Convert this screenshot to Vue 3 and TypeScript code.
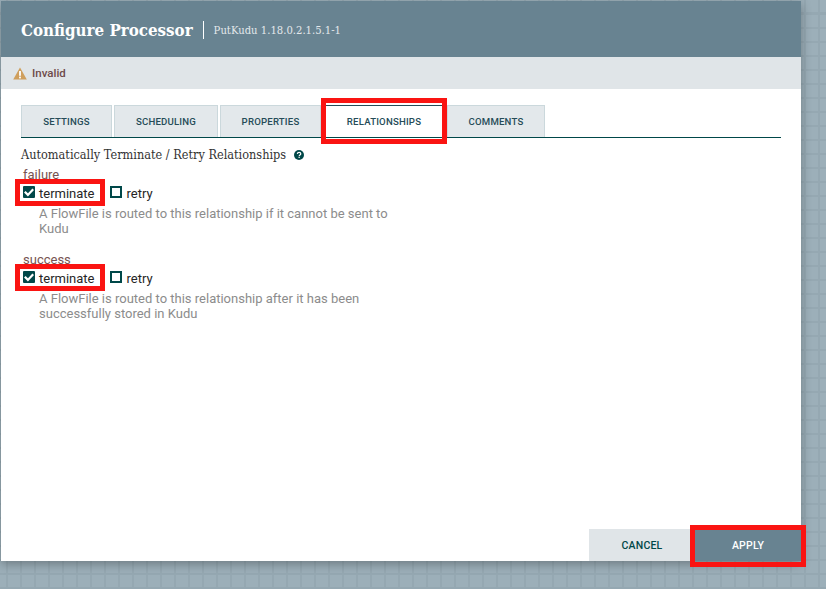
<script setup lang="ts">
interface Relationship {
  name: string
  description: string[]
}

const tabs = ['SETTINGS', 'SCHEDULING', 'PROPERTIES', 'RELATIONSHIPS', 'COMMENTS']
const activeTab = 'RELATIONSHIPS'

const relationships: Relationship[] = [
  {
    name: 'failure',
    description: ['A FlowFile is routed to this relationship if it cannot be sent to', 'Kudu'],
  },
  {
    name: 'success',
    description: ['A FlowFile is routed to this relationship after it has been', 'successfully stored in Kudu'],
  },
]

// red boxes somebody drew on top of the screenshot
const marks = [
  { left: 321, top: 98, width: 126, height: 46 },
  { left: 15, top: 179, width: 90, height: 27 },
  { left: 15, top: 264, width: 90, height: 27 },
  { left: 690, top: 525, width: 116, height: 42 },
]
</script>

<template>
  <div class="page">
    <div class="dialog">
      <header class="dialog-header">
        <span class="title">Configure Processor</span>
        <span class="subtitle">PutKudu 1.18.0.2.1.5.1-1</span>
      </header>

      <div class="status">
        <svg class="warn" width="14" height="13" viewBox="0 0 14 13">
          <path d="M7 0.5 L13.8 12.6 H0.2 Z" fill="#cf9f5d" />
          <rect x="6.1" y="4" width="1.8" height="4.8" fill="#fff" />
          <rect x="6.1" y="9.6" width="1.8" height="1.8" fill="#fff" />
        </svg>
        <span>Invalid</span>
      </div>

      <div class="dialog-body">
        <div class="tabs">
          <div v-for="tab in tabs" :key="tab" class="tab" :class="{ active: tab === activeTab }">{{ tab }}</div>
        </div>

        <div class="setting-name">
          <span>Automatically Terminate / Retry Relationships</span>
          <svg class="help" width="10" height="10" viewBox="0 0 10 10">
            <circle cx="5" cy="5" r="5" fill="#004849" />
            <path d="M3.3 3.9 C3.4 2.8 4.1 2.3 5.1 2.3 C6.1 2.3 6.8 2.9 6.8 3.7 C6.8 4.9 5.2 4.9 5.2 6" fill="none" stroke="#fff" stroke-width="1.2" />
            <rect x="4.5" y="6.7" width="1.3" height="1.2" fill="#fff" />
          </svg>
        </div>

        <div v-for="rel in relationships" :key="rel.name" class="relationship">
          <div class="rel-name">{{ rel.name }}</div>
          <div class="options">
            <span class="option">
              <span class="box checked">
                <svg width="12" height="12" viewBox="0 0 12 12">
                  <path d="M1.8 5.8 L4.9 8.9 L10.2 3.3" fill="none" stroke="#fff" stroke-width="2.2" />
                </svg>
              </span>
              terminate
            </span>
            <span class="option">
              <span class="box"></span>
              retry
            </span>
          </div>
          <div class="rel-desc">
            <div v-for="line in rel.description" :key="line">{{ line }}</div>
          </div>
        </div>
      </div>

      <footer class="dialog-footer">
        <div class="btn cancel">CANCEL</div>
        <div class="btn apply">APPLY</div>
      </footer>
    </div>

    <div
      v-for="(m, i) in marks"
      :key="i"
      class="mark"
      :style="{ left: m.left + 'px', top: m.top + 'px', width: m.width + 'px', height: m.height + 'px' }"
    ></div>
  </div>
</template>

<style>
html,
body {
  margin: 0;
  overflow: hidden;
}
</style>

<style scoped>
.page {
  position: relative;
  width: 826px;
  height: 589px;
  overflow: hidden;
  padding: 1px 0 0 1px;
  box-sizing: border-box;
  background-color: #9cafb9;
  background-image:
    repeating-linear-gradient(to right, #96a9b3 0, #94a7b1 1px, #96a9b3 2px, transparent 2px, transparent 14px),
    repeating-linear-gradient(to bottom, #96a9b3 0, #94a7b1 1px, #96a9b3 2px, transparent 2px, transparent 14px);
  background-position: 6px 13px;
  font-family: Roboto, sans-serif;
}

.dialog {
  width: 800px;
  height: 560px;
  display: flex;
  flex-direction: column;
  background: #fff;
  box-shadow: 0 3px 10px rgba(0, 0, 0, 0.3);
}

.dialog-header {
  height: 56px;
  flex: none;
  display: flex;
  align-items: center;
  padding: 0 20px;
  background: #688391;
  color: #fff;
}

.title {
  font-family: "DejaVu Serif Condensed", "DejaVu Serif", serif;
  font-stretch: condensed;
  font-size: 16.8px;
  font-weight: 700;
  padding-right: 10px;
  border-right: 1px solid #fff;
  line-height: 18px;
  position: relative;
  top: 1px;
}

.subtitle {
  font-family: "DejaVu Serif Condensed", "DejaVu Serif", serif;
  font-stretch: condensed;
  font-size: 11.2px;
  margin-left: 10px;
  position: relative;
  top: 1px;
  color: #e3e8eb;
}

.status {
  height: 32px;
  flex: none;
  display: flex;
  align-items: center;
  gap: 5px;
  padding: 0 13px 0 12px;
  background: #e0e5e8;
  color: #6e4a4a;
  font-size: 11.5px;
  font-weight: 500;
}

.dialog-body {
  flex: 1;
  padding: 16px 20px 0;
}

.tabs {
  display: flex;
  gap: 2px;
  border-bottom: 1px solid #004849;
  height: 32px;
  width: 760px;
}

.tab {
  width: 91px;
  box-sizing: border-box;
  display: flex;
  align-items: center;
  justify-content: center;
  background: #e3e8eb;
  border: 1px solid #cbd8dc;
  border-bottom: none;
  color: #264c58;
  font-size: 9.6px;
  font-weight: 500;
  letter-spacing: 0.2px;
}

.tab:nth-child(2) {
  width: 104px;
}

.tab:nth-child(3) {
  width: 101px;
}

.tab:nth-child(4) {
  width: 126px;
  margin: 0 -2px;
}

.tab:nth-child(5) {
  width: 98px;
}

.tab.active {
  background: #fff;
  border: none;
  border-top: 1px solid #264c58;
}

.setting-name {
  margin-top: 9px;
  height: 16px;
  line-height: 16px;
  font-family: "DejaVu Serif Condensed", "DejaVu Serif", serif;
  font-stretch: condensed;
  font-size: 12.6px;
  color: #333;
  display: flex;
  align-items: center;
  gap: 8px;
}

.relationship {
  margin-left: 2px;
  height: 85px;
}

.rel-name {
  margin-top: 5px;
  height: 15px;
  line-height: 13px;
  font-size: 13px;
  color: #775351;
}

.relationship + .relationship .rel-name {
  margin-top: 0;
}

.options {
  display: flex;
  height: 16px;
  margin-top: 2px;
  align-items: center;
  gap: 15px;
  font-size: 13px;
  color: #262626;
}

.option {
  display: flex;
  align-items: center;
  gap: 4px;
}

.option + .option {
  gap: 5px;
}

.box {
  width: 12px;
  height: 12px;
  box-sizing: border-box;
  border: 2px solid #004849;
  display: flex;
  align-items: center;
  justify-content: center;
  position: relative;
  top: -1px;
}

.box.checked {
  background: #004849;
  border-radius: 1px;
}

.box.checked svg {
  flex: none;
}

.rel-desc {
  margin: 5px 0 0 16px;
  font-size: 13px;
  line-height: 15px;
  color: #8c8c8c;
}

.dialog-footer {
  flex: none;
  display: flex;
  justify-content: flex-end;
  height: 32px;
  gap: 0;
}

.btn {
  width: 106px;
  display: flex;
  align-items: center;
  justify-content: center;
  font-size: 10.5px;
  font-weight: 500;
  letter-spacing: 0.2px;
}

.cancel {
  background: #e0e5e8;
  color: #004849;
}

.apply {
  background: #688391;
  color: #fff;
}

.mark {
  position: absolute;
  box-sizing: border-box;
  border: 5px solid #fa1412;
}
</style>
